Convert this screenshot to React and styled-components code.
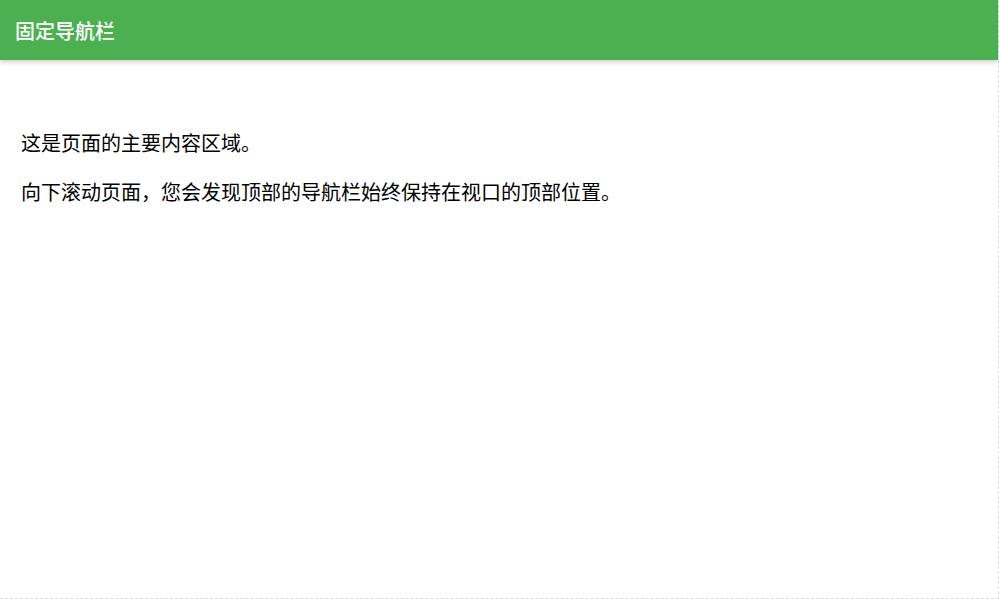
import React from "react";
import styled, { createGlobalStyle } from "styled-components";

const GlobalStyle = createGlobalStyle`
  html, body {
    margin: 0;
    padding: 0;
    background: #fff;
  }
  body {
    font-family: "Noto Sans CJK SC", "Noto Sans", sans-serif;
    color: #000;
  }
`;

const Page = styled.div`
  box-sizing: border-box;
  min-height: 599px;
  border-right: 1px dashed #dcdcdc;
  border-bottom: 1px dashed #dcdcdc;
`;

const NavBar = styled.header`
  position: sticky;
  top: 0;
  height: 60px;
  display: flex;
  align-items: center;
  padding: 0 15px;
  background-color: #4caf50;
  box-shadow: 0 2px 5px rgba(0, 0, 0, 0.2);
  z-index: 10;
`;

const Title = styled.div`
  color: #fff;
  font-size: 20px;
  font-weight: 500;
`;

const Main = styled.main`
  padding: 48px 21px 20px;
`;

const Text = styled.p`
  margin: 20px 0;
  font-size: 20px;
`;

const App = () => {
  return (
    <Page>
      <GlobalStyle />
      <NavBar>
        <Title>固定导航栏</Title>
      </NavBar>
      <Main>
        <Text>这是页面的主要内容区域。</Text>
        <Text>向下滚动页面，您会发现顶部的导航栏始终保持在视口的顶部位置。</Text>
      </Main>
    </Page>
  );
};

export default App;
